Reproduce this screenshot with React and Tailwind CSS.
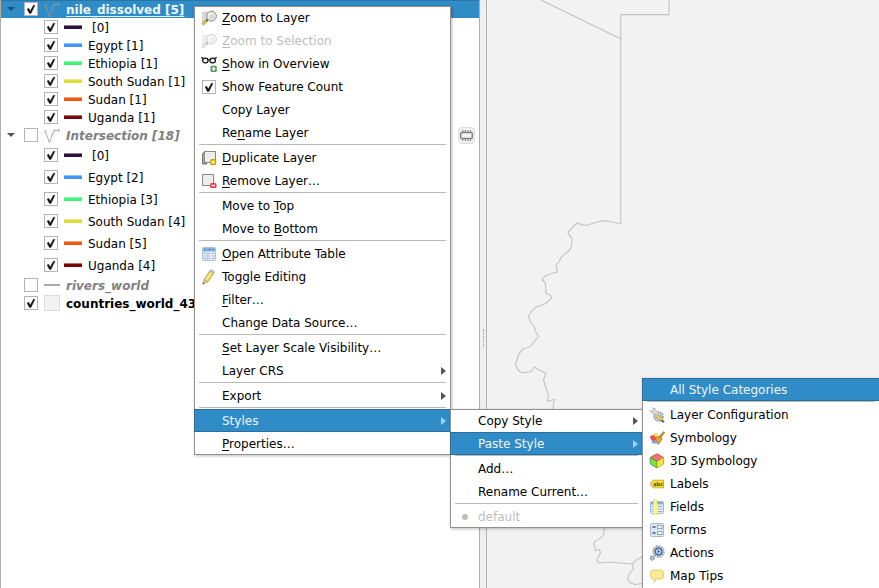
import React from "react";
import clsx from "clsx";

function CheckMark() {
  return (
    <svg viewBox="0 0 14 14" className="pointer-events-none col-start-1 row-start-1 hidden size-3.5 peer-checked:block">
      <path d="M3 7 4.800 6.200 6.200 9 9.400 3.200 11 3.200 7 11.500 5.400 11.500Z" fill="#111" stroke="#111" strokeWidth=".3" />
    </svg>
  );
}

function CheckBox({ checked, label }) {
  return (
    <span className="grid size-3.5 shrink-0">
      <input
        type="checkbox"
        defaultChecked={checked}
        aria-label={label}
        className="peer col-start-1 row-start-1 size-3.5 appearance-none border border-[#b4b4b4] bg-white"
      />
      <CheckMark />
    </span>
  );
}

function GeometryIcon() {
  return (
    <svg viewBox="0 0 16 16" className="size-4" fill="none" stroke="#989b98" strokeWidth=".8">
      <path d="M1.800 5.500 4.800 13.500M6.200 13.500 8 8.200M8.900 6.200 10 4.500M11.500 3.500h2.500" />
      <circle cx="1.500" cy="4.500" r="1" />
      <circle cx="5.500" cy="14.500" r="1" />
      <circle cx="8.500" cy="7.200" r=".8" />
      <circle cx="10.500" cy="3.600" r="1" />
      <circle cx="14.800" cy="3.400" r="1" />
    </svg>
  );
}

const classes = [
  { name: "[0]", line: "border-[#30123b]", halo: "bg-[#8a7891]" },
  { name: "Egypt", line: "border-[#4196ff]", halo: "bg-[#8fc1ff]" },
  { name: "Ethiopia", line: "border-[#3ef27b]", halo: "bg-[#8df8b1]" },
  { name: "South Sudan", line: "border-[#e1dd37]", halo: "bg-[#eeeb87]" },
  { name: "Sudan", line: "border-[#f05b12]", halo: "bg-[#f89f6e]" },
  { name: "Uganda", line: "border-[#7a0403]", halo: "bg-[#b57272]" },
];

function LayerRow({ name, checked, selected, inactive, expandable, icon }) {
  return (
    <div className={clsx("flex h-[18px] items-center pl-1", selected && "bg-[#308cc6] shadow-[inset_0_1px_0_#2a76a8]")}>
      {expandable ? (
        <button type="button" aria-label={`Collapse ${name}`} className="flex w-3 justify-center">
          <svg viewBox="0 0 8 4" className="h-1 w-2">
            <path d="M0 0h8L4 4Z" fill={selected ? "#22506f" : "#555"} />
          </svg>
        </button>
      ) : (
        <span className="w-3" />
      )}
      <label className="ml-[7px] flex items-center whitespace-nowrap">
        <CheckBox checked={checked} label={name} />
        <span className="ml-1.5 flex size-4 items-center justify-center">{icon}</span>
        <span
          className={clsx(
            "ml-1.5 pt-0.5 font-bold",
            selected && "text-[#eff6fb] underline decoration-1 underline-offset-2",
            inactive && "italic text-[#808080]",
          )}
        >
          {name}
        </span>
      </label>
    </div>
  );
}

function ClassList({ counts, roomy }) {
  return (
    <ul>
      {classes.map((c, i) => (
        <li key={c.name} className={clsx("flex items-center pl-[43px]", roomy ? "h-[22px]" : "h-[18px]")}>
          <label className="flex items-center whitespace-nowrap">
            <CheckBox checked label={c.name} />
            <span className={clsx("ml-1.5 h-1 w-[18px] border-b-3", c.line, c.halo)} />
            <span className={clsx("pt-0.5", i === 0 ? "ml-2.5" : "ml-1.5")}>{i === 0 ? c.name : `${c.name} [${counts[i - 1]}]`}</span>
          </label>
        </li>
      ))}
    </ul>
  );
}

function LayerPanel() {
  return (
    <aside className="flex w-[480px] shrink-0 flex-col border-x border-[#adadad] bg-white">
      <LayerRow name="nile_dissolved [5]" checked selected expandable icon={<GeometryIcon />} />
      <ClassList counts={[1, 1, 1, 1, 1]} />
      <div className="flex items-end">
        <div className="grow">
          <LayerRow name="Intersection [18]" inactive expandable icon={<GeometryIcon />} />
        </div>
        <button type="button" aria-label="Temporary scratch layer" className="mr-1 size-[17px] rounded-sm border border-[#dedede] bg-[#efefef]">
          <svg viewBox="0 0 15 15" className="size-[15px]" fill="none" stroke="#828282">
            <rect x="1.700" y="4.500" width="11.600" height="6" rx="1.200" fill="#f4f4f4" strokeWidth="1.500" />
            <path d="M3.800 4V2M6.300 4V2M8.800 4V2M11.300 4V2M3.800 13v-2M6.300 13v-2M8.800 13v-2M11.300 13v-2" />
          </svg>
        </button>
      </div>
      <ClassList counts={[2, 3, 4, 5, 4]} roomy />
      <LayerRow name="rivers_world" inactive icon={<span className="h-0.5 w-4 bg-[#ababab]" />} />
      <LayerRow name="countries_world_43" checked icon={<span className="size-4 border border-[#dcdcdc] bg-[#f2f2f2]" />} />
    </aside>
  );
}

function MapCanvas() {
  return (
    <main className="min-w-0 grow overflow-hidden bg-[#f2f2f2]">
      <svg viewBox="487 0 392 588" className="h-[588px] w-[392px]" fill="none" stroke="#c2c2c2" strokeWidth="1.1" strokeLinejoin="round">
        <path d="M541 0 621 39M669.300 0 668.800 14.600H620.800V224" />
        <path d="M620.500 224 Q616 222.500 610 221.500T601.500 221Q596 222 590 224.300T577.500 223L575 225 568 232.500 569 235Q572 237 572 240T571.500 245.500Q571 249 568.500 251T561 257.500L559 262 556 265.500 557.500 272Q548 274 544.500 276.500L542 279.500 545 282.500 546 289.500 545.500 291.500 546.500 294 549.500 294.500 551.500 297 551 299 544.500 304 535.500 307.500Q531 311 528.500 316.500L530.500 322 534.500 327 535.500 331.500 538.500 336.500Q534 342 531.500 345T523.500 348.500Q519 353 518 356.500T515.500 364.500Q517.500 370 520 371.500T525 372.500 531 371.500L534.500 367 540 370.500 546 373 543.500 380.500 548.500 395 547.500 401.500 554.500 399.500 552.500 410" />
        <path d="M604.500 526 603.500 535Q599 540 596 540.500T594.500 546.500 595.500 550.500L599.500 549.500 600.500 552.500 596.500 560.500 599.500 563 610 562 626.500 563.500 632 564Q637 559 643 556M632 564 633.500 569Q628 575 627.800 577.500T629 581.500 635 584.500L643 583.500" />
      </svg>
    </main>
  );
}

function MagnifierIcon() {
  return (
    <svg viewBox="0 0 16 16" className="size-4">
      <path d="M1.500 2h5v10h-5Z" fill="#d9dad6" stroke="#c4c5c1" strokeWidth=".6" />
      <path d="m5.500 10.500-4 4" stroke="#a87b1c" strokeWidth="2.600" />
      <path d="m5.500 10.500-4 4" stroke="#f4cf58" strokeWidth="1.400" />
      <path d="m7 9-1.500 2" stroke="#555753" strokeWidth="2" />
      <circle cx="10.500" cy="6.200" r="4.900" fill="#e6e8e4" stroke="#888a85" strokeWidth="1" />
      <path d="M7.500 5.500Q8 3.200 10.500 2.800" stroke="#fff" fill="none" />
      <circle cx="11" cy="7" r="2.500" fill="#d6d8d4" />
    </svg>
  );
}

function OverviewIcon() {
  return (
    <svg viewBox="0 0 16 16" className="size-4">
      <path d="M.3 1.300 2.500 2.800M15.700 1.300 13.500 2.800M7 3.800h2" stroke="#222" strokeWidth="1.300" />
      <rect x="1.600" y="2.200" width="5.400" height="4.500" rx="2.200" fill="#fff" stroke="#222" strokeWidth="1.400" />
      <rect x="9" y="2.200" width="5.400" height="4.500" rx="2.200" fill="#fff" stroke="#222" strokeWidth="1.400" />
      <rect x="9.500" y="9.700" width="6.300" height="6.300" rx="1.200" fill="#5a9b5b" />
      <path d="M12.650 11v3.700M10.800 12.850h3.700" stroke="#fff" strokeWidth="1.400" />
    </svg>
  );
}

function DuplicateIcon() {
  return (
    <svg viewBox="0 0 16 16" className="size-4">
      <path d="M1.500 3.500 4 1.500v10L6 14H1.500Z" fill="#a8aaa6" stroke="#777974" />
      <rect x="3.500" y="1.500" width="11" height="11" fill="#eeeeec" stroke="#888a85" />
      <rect x="9.800" y="9.800" width="4.700" height="4.700" rx="1" fill="#f8ec90" stroke="#c4a000" strokeWidth="1.400" />
    </svg>
  );
}

function RemoveIcon() {
  return (
    <svg viewBox="0 0 16 16" className="size-4">
      <rect x="1.500" y="1.500" width="11" height="11" fill="#eeeeec" stroke="#888a85" />
      <rect x="9" y="10" width="6.500" height="5" rx="1.500" fill="#ef3f45" />
      <path d="M10.500 12.500h3.500" stroke="#fff" strokeWidth="1.400" />
    </svg>
  );
}

function TableIcon() {
  return (
    <svg viewBox="0 0 16 16" className="size-4">
      <rect x="1.500" y="1.500" width="13" height="13" rx="1" fill="#e4edf6" stroke="#a4c1df" />
      <path d="M2 2h12v3.500H2Z" fill="#86b3e0" />
      <path d="M3 3.700h2.500M7 3.700h3M11 3.700h2.500" stroke="#5a8fc6" />
      <path d="M2.500 7.500h3M7 7.500h2.500M11 7.500h2.500M2.500 10h3M7 10h2.500M11 10h2.500M2.500 12.500h3M7 12.500h2.500M11 12.500h2.500" stroke="#a6b8ca" />
      <path d="M6.200 6v8.500" stroke="#b4cbe2" />
    </svg>
  );
}

function PencilIcon() {
  return (
    <svg viewBox="0 0 16 16" className="size-4">
      <path d="m3 10.500 5.500-8.500 4 2.500-5.500 8.500Z" fill="#e6d15a" stroke="#a29435" strokeWidth=".6" />
      <path d="M5 11.500 10.500 3.300" stroke="#fff3a4" strokeWidth="1.200" />
      <path d="m8.500 2 1.500-1.500 4 2.500-1.500 1.500Z" fill="#c4c6c8" stroke="#999b9d" strokeWidth=".5" />
      <path d="M3 10.500 1.800 15 7 13Z" fill="#dec69b" stroke="#a79066" strokeWidth=".5" />
      <path d="m2.200 13.200-.5 2 1.800-.8Z" fill="#333" />
    </svg>
  );
}

function ToolsIcon() {
  return (
    <svg viewBox="0 0 16 16" className="size-4">
      <circle cx="9.500" cy="9.500" r="4.600" fill="#c5d1dd" stroke="#8b97a2" strokeWidth="1.400" strokeDasharray="1.500 1" />
      <path d="M.8 3.500 3 4.500 4.500 3.300 3.500 .8Q7 .8 7.300 4L12 9 10.500 10.500 5.500 6.200Q2.500 6.800 .8 3.500Z" fill="#dedede" stroke="#a5a7a4" strokeWidth=".7" />
      <path d="m7.500 8.500 6 5" stroke="#9c8b31" strokeWidth="3.200" />
      <path d="m7.500 8.500 5.500 4.500" stroke="#f3db66" strokeWidth="2" />
      <path d="m12.500 13.500 2.500 1.500" stroke="#555" strokeWidth="1.600" />
    </svg>
  );
}

function BrushIcon() {
  return (
    <svg viewBox="0 0 16 16" className="size-4">
      <path d="M4 4Q7 2 9 4L8 8H3Z" fill="#fae05a" />
      <path d="M.8 7Q2 4.500 5 5.500L8 9 4 12.500Z" fill="#ee4e3f" />
      <path d="M2 12Q5 10 8 9.500L9 13Q4.500 15 2 12Z" fill="#7fa9e2" />
      <path d="m6 7.500 5.500-1.500L13 9l-3.500 5.500Q7.500 12.500 6 7.500Z" fill="#dca24c" stroke="#a8701f" strokeWidth=".7" />
      <path d="m10.500 7.500 4.700-5.500" stroke="#9b6616" strokeWidth="2.300" />
      <path d="m10.500 7.500 4.700-5.500" stroke="#d79a3c" strokeWidth="1.200" />
    </svg>
  );
}

function CubeIcon() {
  return (
    <svg viewBox="0 0 16 16" className="size-4" strokeLinejoin="round">
      <path d="M1.200 4.500 8 .8 14.500 4.500 8 8.500Z" fill="#ef7575" stroke="#c0433d" strokeWidth=".8" />
      <path d="M1.200 4.500 8 8.500V15L1.200 11Z" fill="#7ce043" stroke="#469c28" strokeWidth=".8" />
      <path d="M14.500 4.500 8 8.500V15l6.500-4Z" fill="#f7e449" stroke="#b59e18" strokeWidth=".8" />
    </svg>
  );
}

function LabelIcon() {
  return (
    <svg viewBox="0 0 16 16" className="size-4">
      <path d="M1.200 8 4 4.200h10.500v7.600H4Z" fill="#f5dc35" stroke="#d1b426" strokeLinejoin="round" />
      <circle cx="3.200" cy="8" r=".6" fill="#fff" />
      <text x="4.200" y="10" fontSize="5" fontWeight="bold" fontFamily="DejaVu Sans, sans-serif" fill="#4c451c">abc</text>
    </svg>
  );
}

function FieldsIcon() {
  return (
    <svg viewBox="0 0 16 16" className="size-4">
      <rect x="1.500" y="2.500" width="13" height="12" rx="1" fill="#e8eff7" stroke="#a0bbd9" />
      <path d="M2 3h12v2.500H2Z" fill="#86aedb" />
      <path d="M2.500 7.500h2M9 7.500h4.500M2.500 10h2M9 10h4.500M2.500 12.500h2M9 12.500h4.500" stroke="#9badc0" />
      <rect x="4.500" y=".5" width="3.500" height="15.500" fill="#fdf68a" stroke="#e8df62" strokeWidth=".5" />
    </svg>
  );
}

function FormsIcon() {
  return (
    <svg viewBox="0 0 16 16" className="size-4">
      <rect x="1.500" y="1.500" width="13" height="13" rx="1" fill="#dce7f3" stroke="#a6bbd2" />
      <path d="M3.500 5h3M3.500 11h3" stroke="#46586c" strokeWidth="1.300" />
      <rect x="8.500" y="3.500" width="4.500" height="3" fill="#fff" stroke="#8ba8c8" />
      <rect x="8.500" y="9.500" width="4.500" height="3" fill="#fff" stroke="#8ba8c8" />
    </svg>
  );
}

function ActionsIcon() {
  return (
    <svg viewBox="0 0 16 16" className="size-4">
      <circle cx="9.500" cy="6.500" r="5.300" fill="#e3e7eb" stroke="#98a1a9" strokeWidth="1.900" strokeDasharray="1.700 1" />
      <circle cx="9.500" cy="6.500" r="4.700" fill="#d5dbe0" stroke="#98a1a9" strokeWidth=".6" />
      <circle cx="9.500" cy="6.500" r="3.200" fill="#dce9f6" stroke="#396da7" strokeWidth="1.400" />
      <path d="m8.500 4.700 2.800 1.800-2.800 1.800Z" fill="#2c609b" />
      <circle cx="3.300" cy="12.900" r="2" fill="#8da3b9" stroke="#8499ae" strokeWidth="1.500" strokeDasharray="1.400 .8" />
      <circle cx="3.300" cy="12.900" r=".8" fill="#e8edf2" />
    </svg>
  );
}

function TipIcon() {
  return (
    <svg viewBox="0 0 16 16" className="size-4">
      <path d="M4.500 2h7Q14.500 2 14.500 5v3Q14.500 11 11.500 11H7.500L5 14.500V11Q1.500 11 1.500 8V5Q1.500 2 4.500 2Z" fill="#f8ec98" stroke="#e2d06b" />
    </svg>
  );
}

function Label({ text }) {
  const [before, key, after] = text.split("_");
  if (key === undefined) return <span>{text}</span>;
  return (
    <span>
      {before}
      <u className="decoration-1 underline-offset-2">{key}</u>
      {after}
    </span>
  );
}

function MenuItem({ text, icon, checked, bullet, disabled, submenu, active }) {
  const row = clsx(
    "flex h-[23px] w-full items-center pr-[5px] pl-[7px] text-left whitespace-nowrap",
    active && "bg-[#308cc6] text-[#eff6fb] shadow-[inset_0_0_0_1px_#2a6f9e]",
    disabled && "text-[#bebebe]",
  );
  if (checked) {
    return (
      <label className={row}>
        <span className="mr-[5px] flex w-4 justify-center">
          <CheckBox checked label={text} />
        </span>
        <Label text={text} />
      </label>
    );
  }
  return (
    <button type="button" role="menuitem" disabled={disabled} className={row}>
      <span className={clsx("mr-[5px] flex w-4 justify-center", disabled && icon && "opacity-40 grayscale")}>
        {bullet ? <span className="size-1.5 rounded-full bg-[#bebebe]" /> : icon}
      </span>
      <Label text={text} />
      {submenu && (
        <svg viewBox="0 0 5 8" className="ml-auto h-2 w-[5px]">
          <path d="M0 0 5 4 0 8Z" fill={active ? "#a9d0ea" : "#555"} />
        </svg>
      )}
    </button>
  );
}

function Menu({ groups, label, className }) {
  return (
    <div role="menu" aria-label={label} className={clsx("absolute bg-white shadow-[inset_0_0_0_1px_#919191,1px_1px_3px_#00000040]", className)}>
      {groups.map((items, i) => (
        <React.Fragment key={i}>
          {i > 0 && <div role="separator" className="mx-[5px] h-0.5 border-t border-[#b9b9b9]" />}
          {items.map((item) => (
            <MenuItem key={item.text} {...item} />
          ))}
        </React.Fragment>
      ))}
    </div>
  );
}

// An underscore pair marks the mnemonic letter of an entry.
const layerMenu = [
  [
    { text: "_Z_oom to Layer", icon: <MagnifierIcon /> },
    { text: "_Z_oom to Selection", icon: <MagnifierIcon />, disabled: true },
    { text: "_S_how in Overview", icon: <OverviewIcon /> },
    { text: "Show Feature Count", checked: true },
    { text: "Copy Layer" },
    { text: "Re_n_ame Layer" },
  ],
  [
    { text: "_D_uplicate Layer", icon: <DuplicateIcon /> },
    { text: "_R_emove Layer…", icon: <RemoveIcon /> },
  ],
  [{ text: "Move to _T_op" }, { text: "Move to _B_ottom" }],
  [
    { text: "_O_pen Attribute Table", icon: <TableIcon /> },
    { text: "Toggle Editing", icon: <PencilIcon /> },
    { text: "_F_ilter…" },
    { text: "Change Data Source…" },
  ],
  [{ text: "_S_et Layer Scale Visibility…" }, { text: "Layer CRS", submenu: true }],
  [{ text: "Export", submenu: true }],
  [{ text: "Styles", submenu: true, active: true }, { text: "_P_roperties…" }],
];

const stylesMenu = [
  [
    { text: "Copy Style", submenu: true },
    { text: "Paste Style", submenu: true, active: true },
  ],
  [{ text: "Add…" }, { text: "Rename Current…" }],
  [{ text: "default", bullet: true, disabled: true }],
];

const categoriesMenu = [
  [{ text: "All Style Categories", active: true }],
  [
    { text: "Layer Configuration", icon: <ToolsIcon /> },
    { text: "Symbology", icon: <BrushIcon /> },
    { text: "3D Symbology", icon: <CubeIcon /> },
    { text: "Labels", icon: <LabelIcon /> },
    { text: "Fields", icon: <FieldsIcon /> },
    { text: "Forms", icon: <FormsIcon /> },
    { text: "Actions", icon: <ActionsIcon /> },
    { text: "Map Tips", icon: <TipIcon /> },
  ],
];

export default function App() {
  return (
    <div className="relative flex h-screen overflow-hidden bg-[#efefef] font-['DejaVu_Sans',sans-serif] text-[12px] leading-4 text-black">
      <LayerPanel />
      <div className="flex w-[7px] shrink-0 flex-col items-center border-r border-[#b4b4b4] pt-[329px]">
        <span className="h-[18px] border-l border-dotted border-[#999]" />
      </div>
      <MapCanvas />
      <Menu label="Layer" groups={layerMenu} className="top-1.5 left-[194px] w-[257px]" />
      <Menu label="Styles" groups={stylesMenu} className="top-[409px] left-[450px] w-[193px]" />
      <Menu label="Paste Style" groups={categoriesMenu} className="top-[378px] left-[642px] w-[238px] pb-1" />
    </div>
  );
}
